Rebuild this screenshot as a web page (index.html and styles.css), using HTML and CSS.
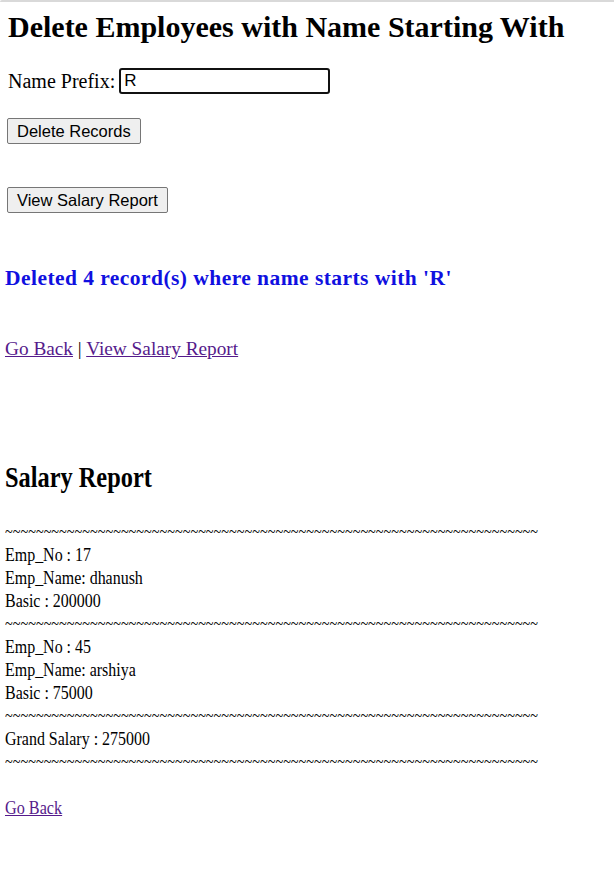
FILE: index.html
```html
<!DOCTYPE html>
<html>
<head>
<meta charset="utf-8">
<title>Delete Employees</title>
<link rel="stylesheet" href="styles.css">
</head>
<body>
<div class="frame-edge"></div>
<div class="top">
  <h1 class="title">Delete Employees with Name Starting With</h1>
  <form class="row-form">
    <label class="prefix">Name Prefix: <input class="prefix-input" type="text" value="R"></label>
    <div class="btn-row"><button type="button" class="btn">Delete Records</button></div>
  </form>
  <form class="row-form second">
    <button type="button" class="btn">View Salary Report</button>
  </form>
</div>
<div class="result">
  <h3 class="msg">Deleted 4 record(s) where name starts with 'R'</h3>
  <p class="links"><a href="#" class="visited">Go Back</a> | <a href="#" class="visited">View Salary Report</a></p>
  <div class="report">
    <h2 class="report-title">Salary Report</h2>
    <div class="tilde first">~~~~~~~~~~~~~~~~~~~~~~~~~~~~~~~~~~~~~~~~~~~~~~~~~~~~~~~~~~~~~~~~~~~~~</div>
    <div class="line">Emp_No : 17</div>
    <div class="line">Emp_Name: dhanush</div>
    <div class="line">Basic : 200000</div>
    <div class="tilde">~~~~~~~~~~~~~~~~~~~~~~~~~~~~~~~~~~~~~~~~~~~~~~~~~~~~~~~~~~~~~~~~~~~~~</div>
    <div class="line">Emp_No : 45</div>
    <div class="line">Emp_Name: arshiya</div>
    <div class="line">Basic : 75000</div>
    <div class="tilde">~~~~~~~~~~~~~~~~~~~~~~~~~~~~~~~~~~~~~~~~~~~~~~~~~~~~~~~~~~~~~~~~~~~~~</div>
    <div class="line">Grand Salary : 275000</div>
    <div class="tilde">~~~~~~~~~~~~~~~~~~~~~~~~~~~~~~~~~~~~~~~~~~~~~~~~~~~~~~~~~~~~~~~~~~~~~</div>
    <p class="links back"><a href="#" class="visited">Go Back</a></p>
  </div>
</div>
</body>
</html>
```
FILE: styles.css
```css
html, body {
  margin: 0;
  padding: 0;
  background: #fff;
  font-family: "Liberation Serif", "Times New Roman", serif;
  color: #000;
}
.frame-edge {
  height: 2px;
  background: #d9d9d9;
  border-top-left-radius: 3px;
}
.top {
  padding: 0 8px;
}
.title {
  font-size: 30px;
  font-weight: bold;
  line-height: 37px;
  margin: 6px 0 0;
}
.row-form {
  margin: 0;
}
.prefix {
  display: flex;
  align-items: center;
  gap: 4px;
  font-size: 20px;
  margin-top: 23px;
  height: 26px;
}
.prefix-input {
  box-sizing: border-box;
  width: 211px;
  height: 26px;
  border: 2px solid #111;
  border-radius: 3px;
  font-family: "Liberation Sans", Arial, sans-serif;
  font-size: 17px;
  padding: 0 3px;
  margin: 0;
  outline: none;
}
.btn-row {
  margin-top: 24px;
}
.btn {
  box-sizing: border-box;
  font-family: "Liberation Sans", Arial, sans-serif;
  font-size: 16.5px;
  line-height: 18px;
  padding: 3px 9px;
  height: 26px;
  margin: 0 0 0 -1px;
  background: #efefef;
  border: 1px solid #767676;
  border-radius: 2px;
  color: #000;
}
.second {
  margin-top: 43px;
}
.result {
  padding: 0 5px;
}
.msg {
  color: #1010e0;
  font-size: 21.5px;
  letter-spacing: 0.45px;
  font-weight: bold;
  margin: 52px 0 0;
  line-height: 26px;
}
.links {
  font-size: 19.3px;
  margin: 47px 0 0;
  line-height: 22px;
}
.links a.visited {
  color: #551a8b;
}
.report {
  transform: scaleX(0.84);
  transform-origin: 0 0;
}
.report-title {
  font-size: 29px;
  font-weight: bold;
  margin: 100px 0 0;
  line-height: 34px;
}
.tilde {
  font-size: 17px;
  line-height: 23px;
  white-space: nowrap;
}
.tilde.first {
  margin-top: 26px;
}
.line {
  font-size: 19px;
  line-height: 23px;
}
.back {
  margin-top: 24px;
}
```
